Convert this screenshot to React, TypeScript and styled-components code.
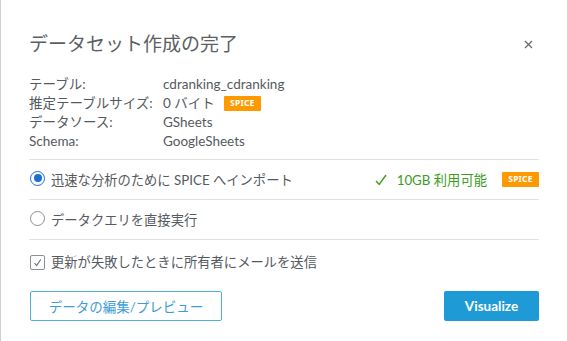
import React from "react";
import styled, { createGlobalStyle } from "styled-components";

const Global = createGlobalStyle`
  html, body { margin: 0; padding: 0; background: #fff; }
  body {
    font-family: "Lato", "Noto Sans CJK JP", sans-serif;
    color: #555a60;
  }
`;

const Dialog = styled.div`
  box-sizing: border-box;
  width: 567px;
  height: 341px;
  border-left: 1px solid #cfcfcf;
  padding: 30px 28px 0 28px;
  display: flex;
  flex-direction: column;
`;

const Header = styled.div`
  display: flex;
  align-items: center;
  justify-content: space-between;
  height: 28px;
`;

const Title = styled.h1`
  margin: 0;
  font-size: 19px;
  font-weight: 400;
  line-height: 28px;
  color: #5b5f64;
`;

const Close = styled.button`
  border: none;
  background: transparent;
  padding: 0;
  width: 24px;
  height: 24px;
  display: flex;
  align-items: center;
  justify-content: center;
  margin-right: -1px;
`;

const Info = styled.div`
  margin-top: 17px;
  display: grid;
  grid-template-columns: 134px 1fr;
  font-size: 13.5px;
  line-height: 19px;
  padding-bottom: 8px;
  border-bottom: 1px solid #e1e1e1;
`;

const Label = styled.div``;

const Value = styled.div`
  display: flex;
  align-items: center;
  gap: 9px;
`;

const Badge = styled.span`
  display: inline-flex;
  align-items: center;
  justify-content: center;
  width: 37px;
  height: 15px;
  background: #ff9900;
  color: #fff;
  font-family: "Noto Sans", sans-serif;
  font-size: 8.5px;
  font-weight: 700;
  letter-spacing: 0.2px;
  border-radius: 1px;
  line-height: 1;
`;

const OptionRow = styled.label`
  display: flex;
  align-items: center;
  height: 39px;
  border-bottom: 1px solid #e1e1e1;
  font-size: 13.3px;
  gap: 6px;
  padding-left: 1px;
`;

const Radio = styled.span<{ $checked?: boolean }>`
  box-sizing: border-box;
  width: 15px;
  height: 15px;
  border-radius: 50%;
  border: 1.5px solid ${(p) => (p.$checked ? "#1a6fd0" : "#8a8f96")};
  display: flex;
  align-items: center;
  justify-content: center;
  margin-top: -3px;
  &::after {
    content: "";
    width: 8px;
    height: 8px;
    border-radius: 50%;
    background: ${(p) => (p.$checked ? "#1a6fd0" : "transparent")};
  }
`;

const Spacer = styled.div`
  flex: 1;
`;

const Available = styled.span`
  display: flex;
  align-items: center;
  gap: 10px;
  color: #3c9c22;
  margin-right: 9px;
`;

const CheckRow = styled.label`
  display: flex;
  align-items: center;
  height: 43px;
  font-size: 13.3px;
  gap: 6px;
  padding-left: 1px;
`;

const Box = styled.span`
  box-sizing: border-box;
  width: 15px;
  height: 15px;
  border: 1px solid #8a8f96;
  border-radius: 2px;
  display: flex;
  align-items: center;
  justify-content: center;
  margin-top: 2px;
`;

const Footer = styled.div`
  margin-top: 8px;
  display: flex;
  justify-content: space-between;
  align-items: center;
`;

const OutlineButton = styled.button`
  box-sizing: border-box;
  width: 192px;
  height: 30px;
  border: 1.5px solid #4fb0de;
  border-radius: 2px;
  background: #fff;
  color: #3d9dd6;
  font-family: inherit;
  font-size: 13.5px;
  padding: 0;
  margin-left: 1px;
`;

const PrimaryButton = styled.button`
  box-sizing: border-box;
  width: 95px;
  height: 30px;
  border: none;
  border-radius: 2px;
  background: #1e9ad6;
  color: #fff;
  font-family: inherit;
  font-size: 13.5px;
  font-weight: 700;
  padding: 0;
`;

export default function App() {
  return (
    <>
      <Global />
      <Dialog>
        <Header>
          <Title>データセット作成の完了</Title>
          <Close aria-label="close">
            <svg width="9" height="9" viewBox="0 0 9 9">
              <path d="M1 1L8 8M8 1L1 8" stroke="#6b6b6b" strokeWidth="1.3" />
            </svg>
          </Close>
        </Header>
        <Info>
          <Label>テーブル:</Label>
          <Value>cdranking_cdranking</Value>
          <Label>推定テーブルサイズ:</Label>
          <Value>
            0 バイト <Badge>SPICE</Badge>
          </Value>
          <Label>データソース:</Label>
          <Value>GSheets</Value>
          <Label>Schema:</Label>
          <Value>GoogleSheets</Value>
        </Info>
        <OptionRow>
          <Radio $checked />
          迅速な分析のために SPICE へインポート
          <Spacer />
          <Available>
            <svg width="12" height="12" viewBox="0 0 12 12">
              <path d="M1 7L4.2 10.5L11 1" stroke="#3c9c22" strokeWidth="1.4" fill="none" />
            </svg>
            10GB 利用可能
          </Available>
          <Badge>SPICE</Badge>
        </OptionRow>
        <OptionRow>
          <Radio />
          データクエリを直接実行
        </OptionRow>
        <CheckRow>
          <Box>
            <svg width="9" height="9" viewBox="0 0 9 9">
              <path d="M1.5 5L3.6 7.5L7.8 1.5" stroke="#6b6f75" strokeWidth="1.1" fill="none" />
            </svg>
          </Box>
          更新が失敗したときに所有者にメールを送信
        </CheckRow>
        <Footer>
          <OutlineButton>データの編集/プレビュー</OutlineButton>
          <PrimaryButton>Visualize</PrimaryButton>
        </Footer>
      </Dialog>
    </>
  );
}
